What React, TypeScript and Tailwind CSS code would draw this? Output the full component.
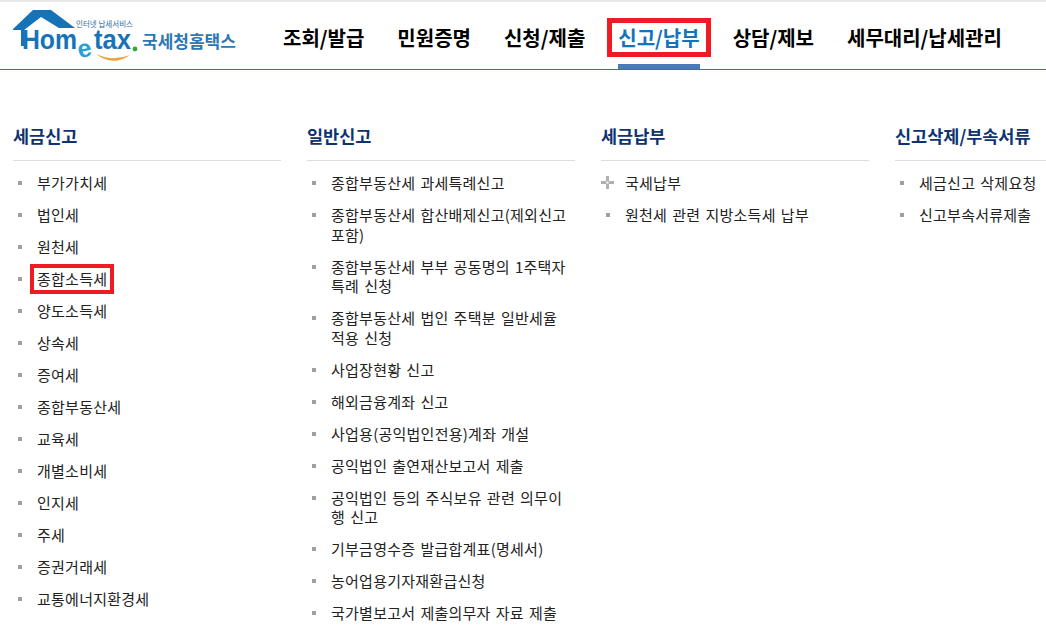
const navItems = ["조회/발급", "민원증명", "신청/제출", "신고/납부", "상담/제보", "세무대리/납세관리"]

const sections = [
  {
    title: "세금신고",
    items: ["부가가치세", "법인세", "원천세", "종합소득세", "양도소득세", "상속세", "증여세", "종합부동산세", "교육세", "개별소비세", "인지세", "주세", "증권거래세", "교통에너지환경세"],
  },
  {
    title: "일반신고",
    items: [
      "종합부동산세 과세특례신고",
      "종합부동산세 합산배제신고(제외신고 포함)",
      "종합부동산세 부부 공동명의 1주택자 특례 신청",
      "종합부동산세 법인 주택분 일반세율 적용 신청",
      "사업장현황 신고",
      "해외금융계좌 신고",
      "사업용(공익법인전용)계좌 개설",
      "공익법인 출연재산보고서 제출",
      "공익법인 등의 주식보유 관련 의무이행 신고",
      "기부금영수증 발급합계표(명세서)",
      "농어업용기자재환급신청",
      "국가별보고서 제출의무자 자료 제출",
    ],
  },
  { title: "세금납부", items: ["국세납부", "원천세 관련 지방소득세 납부"] },
  { title: "신고삭제/부속서류", items: ["세금신고 삭제요청", "신고부속서류제출"] },
]

function Logo() {
  return (
    <svg width="226" height="56" viewBox="0 0 226 56" className="shrink-0">
      <path d="M0 19 L20 0 L38 0 L62 18 L46 18 L28 7 L11 20 L11 36 L8 36 L8 20 L0 20 Z" fill="#1673b8" />
      <text x="63" y="17" fontSize="7.5" fill="#2b6ea6" textLength="57" lengthAdjust="spacingAndGlyphs" fontFamily="'Noto Sans CJK KR', sans-serif">인터넷 납세서비스</text>
      <text x="9" y="39" fontSize="27" fontWeight="700" fill="#1673b8" textLength="55" lengthAdjust="spacingAndGlyphs" fontFamily="'Liberation Sans', sans-serif">Hom</text>
      <text x="65" y="47" fontSize="25" fontWeight="700" fill="#2a9fd6" transform="rotate(-12 72 42)" fontFamily="'Liberation Sans', sans-serif">e</text>
      <text x="81" y="39" fontSize="27" fontWeight="700" fill="#1673b8" textLength="37" lengthAdjust="spacingAndGlyphs" fontFamily="'Liberation Sans', sans-serif">tax</text>
      <circle cx="122" cy="39" r="2.4" fill="#3aa535" />
      <path d="M83 44 Q100 57 117 45 Q100 52 83 44 Z" fill="#f0a02c" />
      <text x="129" y="38" fontSize="17" fontWeight="700" fill="#2b78b4" fontFamily="'Noto Sans CJK KR', sans-serif">국세청홈택스</text>
    </svg>
  )
}

function PlusIcon() {
  return (
    <svg width="13" height="13" viewBox="0 0 13 13" className="shrink-0 mt-[3px] mr-[11px]">
      <path d="M5 0h3v5h5v3H8v5H5V8H0V5h5z" fill="#b0b0b0" />
      <rect x="5.5" y="5.5" width="2" height="2" fill="#ffffff" />
    </svg>
  )
}

export default function App() {
  return (
    <div className="w-[1046px] h-[628px] overflow-hidden bg-white text-[#222] font-['Noto_Sans_CJK_KR','Liberation_Sans',sans-serif]">
      <header className="h-[70px] border-b border-[#4a6a9c] border-t-2 border-t-[#e8e8e8] flex items-start pl-[13px]">
        <div className="mt-[8px]">
          <Logo />
        </div>
        <nav className="flex ml-[44px] gap-[33px] self-stretch pt-[16px]">
          {navItems.map((item) => {
            const active = item === "신고/납부"
            return (
              <div key={item} className="flex flex-col">
                <div
                  className={`h-[39px] flex items-center justify-center text-[20px] font-bold whitespace-nowrap ${
                    active ? "text-[#1473bd] border-[5px] border-[#ed1c24] px-[6px] -mx-[11px]" : "text-black"
                  }`}
                >
                  {item}
                </div>
                {active && <div className="mt-auto h-[5px] bg-[#4a7ab8]" />}
              </div>
            )
          })}
        </nav>
      </header>
      <main className="flex gap-[26px] pl-[13px] pt-[50px]">
        {sections.map((section) => (
          <section key={section.title} className="w-[268px] shrink-0">
            <h2 className="h-[41px] border-b border-[#ddd] text-[17.5px] leading-[32px] font-bold text-[#0d3470] whitespace-nowrap">{section.title}</h2>
            <ul className="pt-[12px]">
              {section.items.map((item) => (
                <li key={item} className="flex items-start pb-[12.4px] text-[15px] tracking-[0.25px] [word-spacing:1.5px] leading-[19.6px] text-[#222] break-all">
                  {item === "국세납부" ? <PlusIcon /> : <span className="shrink-0 w-[4px] h-[4px] mt-[8px] ml-[5px] mr-[15px] bg-[#a0a0a0]" />}
                  {item === "종합소득세" ? (
                    <span className="block w-fit border-[4px] border-[#ed1c24] px-[3px] py-[1.2px] -mx-[7px] -my-[5.2px]">{item}</span>
                  ) : (
                    <span className="min-w-0">{item}</span>
                  )}
                </li>
              ))}
            </ul>
          </section>
        ))}
      </main>
    </div>
  )
}
